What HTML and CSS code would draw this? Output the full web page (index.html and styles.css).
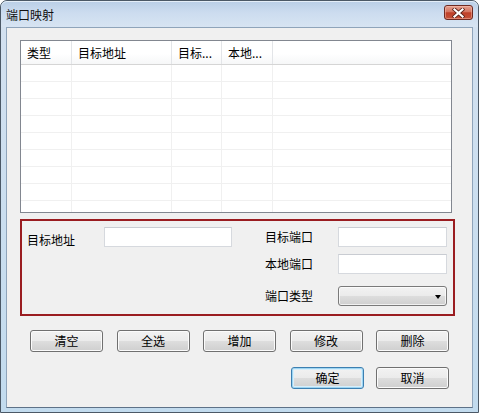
FILE: index.html
```html
<!DOCTYPE html>
<html lang="zh-CN">
<head>
<meta charset="utf-8">
<title>端口映射</title>
<link rel="stylesheet" href="styles.css">
</head>
<body>
<div class="window">
  <div class="titlebar">
    <span class="title">端口映射</span>
    <div class="close-btn">
      <svg width="13" height="10" viewBox="0 0 13 10" aria-hidden="true">
        <path d="M2.5 1.5 L10.5 8.5 M10.5 1.5 L2.5 8.5" stroke="#5a2018" stroke-width="3.8" stroke-linecap="square"/>
        <path d="M2.5 1.5 L10.5 8.5 M10.5 1.5 L2.5 8.5" stroke="#ffffff" stroke-width="2.2" stroke-linecap="square"/>
      </svg>
    </div>
  </div>
  <div class="frame">
    <div class="client">
      <div class="listview">
        <div class="lv-header">
          <div class="lv-cell c1">类型</div>
          <div class="lv-cell c2">目标地址</div>
          <div class="lv-cell c3">目标...</div>
          <div class="lv-cell c4">本地...</div>
          <div class="lv-cell c5"></div>
        </div>
        <div class="lv-row"><div class="lv-cell c1"></div><div class="lv-cell c2"></div><div class="lv-cell c3"></div><div class="lv-cell c4"></div><div class="lv-cell c5"></div></div>
        <div class="lv-row"><div class="lv-cell c1"></div><div class="lv-cell c2"></div><div class="lv-cell c3"></div><div class="lv-cell c4"></div><div class="lv-cell c5"></div></div>
        <div class="lv-row"><div class="lv-cell c1"></div><div class="lv-cell c2"></div><div class="lv-cell c3"></div><div class="lv-cell c4"></div><div class="lv-cell c5"></div></div>
        <div class="lv-row"><div class="lv-cell c1"></div><div class="lv-cell c2"></div><div class="lv-cell c3"></div><div class="lv-cell c4"></div><div class="lv-cell c5"></div></div>
        <div class="lv-row"><div class="lv-cell c1"></div><div class="lv-cell c2"></div><div class="lv-cell c3"></div><div class="lv-cell c4"></div><div class="lv-cell c5"></div></div>
        <div class="lv-row"><div class="lv-cell c1"></div><div class="lv-cell c2"></div><div class="lv-cell c3"></div><div class="lv-cell c4"></div><div class="lv-cell c5"></div></div>
        <div class="lv-row"><div class="lv-cell c1"></div><div class="lv-cell c2"></div><div class="lv-cell c3"></div><div class="lv-cell c4"></div><div class="lv-cell c5"></div></div>
        <div class="lv-row"><div class="lv-cell c1"></div><div class="lv-cell c2"></div><div class="lv-cell c3"></div><div class="lv-cell c4"></div><div class="lv-cell c5"></div></div>
        <div class="lv-row"><div class="lv-cell c1"></div><div class="lv-cell c2"></div><div class="lv-cell c3"></div><div class="lv-cell c4"></div><div class="lv-cell c5"></div></div>
      </div>

      <div class="group">
        <div class="label label-left r1 col1">目标地址</div>
        <div class="textbox r1 col2"></div>
        <div class="label r1 col4">目标端口</div>
        <div class="textbox r1 col5"></div>
        <div class="label r2 col4">本地端口</div>
        <div class="textbox r2 col5"></div>
        <div class="label r3 col4">端口类型</div>
        <div class="combo r3 col5"><span class="arrow"></span></div>
      </div>

      <div class="btn-row spread">
        <div class="btn">清空</div>
        <div class="btn">全选</div>
        <div class="btn">增加</div>
        <div class="btn">修改</div>
        <div class="btn">删除</div>
      </div>
      <div class="btn-row end">
        <div class="btn default">确定</div>
        <div class="btn">取消</div>
      </div>
    </div>
  </div>
</div>
</body>
</html>
```

FILE: styles.css
```css
html, body {
  margin: 0;
  padding: 0;
  background: #ffffff;
}

body {
  font-family: "Noto Sans CJK SC", "Noto Sans", sans-serif;
  font-size: 12px;
  color: #000;
}

.window {
  width: 479px;
  height: 413px;
  box-sizing: border-box;
  border: 1px solid #4b5866;
  border-radius: 7px 7px 0 0;
  background: #c6dbee;
  display: flex;
  flex-direction: column;
  overflow: hidden;
}

.titlebar {
  height: 26px;
  flex: none;
  display: flex;
  justify-content: space-between;
  align-items: flex-start;
  padding-left: 5px;
  background: linear-gradient(#b9cee6 0%, #ccdcef 45%, #d7e4f2 100%);
  border-radius: 6px 6px 0 0;
  box-shadow: inset 0 1px 0 #e4eef8;
}

.title {
  align-self: center;
  line-height: 16px;
  margin-top: 1px;
  color: #111;
}

.close-btn {
  width: 29px;
  height: 15px;
  margin-top: 4px;
  margin-right: 5px;
  box-sizing: border-box;
  border: 1px solid #6e2a22;
  border-radius: 3px;
  background: linear-gradient(#e4a190 0%, #d47460 45%, #bf3f28 52%, #c4523a 100%);
  box-shadow: inset 0 0 0 1px rgba(255, 200, 185, 0.45);
  display: flex;
  align-items: center;
  justify-content: center;
}

.close-btn svg {
  display: block;
}

.frame {
  flex: 1;
  padding: 0 5px 4px;
  background: linear-gradient(#d3e1f0, #c2dbee);
  display: flex;
}

.client {
  flex: 1;
  box-sizing: border-box;
  border: 1px solid #8fa4ba;
  border-bottom-color: #5e7288;
  background: #f0f0f0;
  display: flex;
  flex-direction: column;
}

/* List view */
.listview {
  margin: 12px 0 0 13px;
  width: 432px;
  height: 173px;
  box-sizing: border-box;
  border: 1px solid #828790;
  background: #ffffff;
  overflow: hidden;
}

.lv-header {
  display: flex;
  height: 23px;
  border-bottom: 1px solid #d5d5d5;
  background: linear-gradient(#ffffff 0%, #ffffff 55%, #f6f7f8 100%);
}

.lv-header .lv-cell {
  line-height: 23px;
  padding-left: 6px;
  border-right: 1px solid #e3e5e8;
}

.lv-cell {
  box-sizing: border-box;
  flex: none;
  overflow: hidden;
  white-space: nowrap;
}

.c1 { width: 51px; }
.c2 { width: 100px; }
.c3 { width: 50px; }
.c4 { width: 51px; }
.c5 { flex: 1; }

.lv-header .c5 { border-right: none; }

.lv-row {
  display: flex;
  height: 17px;
  border-bottom: 1px solid #f0f0f0;
  box-sizing: border-box;
}

.lv-row .lv-cell {
  border-right: 1px solid #f0f0f0;
}

.lv-row .c5 { border-right: none; }

/* Group box */
.group {
  margin: 6px 0 0 13px;
  width: 435px;
  height: 97px;
  box-sizing: border-box;
  border: 2px solid #9a1c20;
  padding: 6px 6px 8px 5px;
  display: grid;
  grid-template-columns: 77px 128px 33px 73px 109px;
  grid-template-rows: 20px 20px 25px;
  row-gap: 7px;
}

.r1 { grid-row: 1; }
.r2 { grid-row: 2; }
.r3 { grid-row: 3; align-self: end; }
.col1 { grid-column: 1; }
.col2 { grid-column: 2; }
.col4 { grid-column: 4; }
.col5 { grid-column: 5; }

.label {
  line-height: 20px;
  height: 20px;
  white-space: nowrap;
}

.label-left {
  padding-top: 3px;
  box-sizing: border-box;
}

.textbox {
  height: 20px;
  box-sizing: border-box;
  border: 1px solid #d6d9de;
  border-top-color: #c9ccd2;
  background: #ffffff;
}

.combo {
  height: 20px;
  box-sizing: border-box;
  border: 1px solid #7a7a7a;
  border-radius: 3px;
  background: linear-gradient(#f2f2f2 0%, #ebebeb 48%, #dddddd 52%, #cfcfcf 100%);
  box-shadow: inset 0 0 0 1px rgba(255, 255, 255, 0.7);
  display: flex;
  align-items: center;
  justify-content: flex-end;
  padding-right: 5px;
}

.arrow {
  width: 0;
  height: 0;
  border-left: 3.5px solid transparent;
  border-right: 3.5px solid transparent;
  border-top: 4px solid #000;
  margin-top: 1px;
}

/* Buttons */
.btn-row {
  display: flex;
  margin-left: 23px;
  width: 419px;
  height: 22px;
}

.btn-row.spread {
  margin-top: 14px;
  justify-content: space-between;
}

.btn-row.end {
  margin-top: 15px;
  justify-content: flex-end;
  gap: 12px;
}

.btn {
  width: 73px;
  height: 22px;
  box-sizing: border-box;
  border: 1px solid #707070;
  border-radius: 3px;
  background: linear-gradient(#f2f2f2 0%, #ebebeb 48%, #dddddd 52%, #cfcfcf 100%);
  box-shadow: inset 0 0 0 1px #fbfbfb;
  text-align: center;
  line-height: 20px;
}

.btn.default {
  border-color: #3c7fb1;
  box-shadow: inset 0 0 0 1px #9ed5f2, inset 0 0 0 2px #d8eefa;
}
```
